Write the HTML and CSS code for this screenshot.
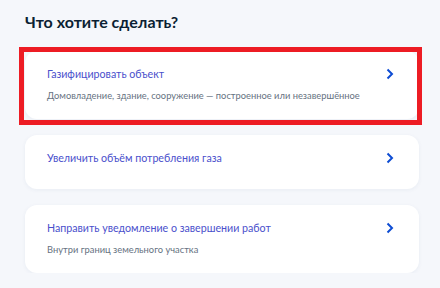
FILE: index.html
```html
<!DOCTYPE html>
<html>
<head>
    <meta charset="utf-8">
    <title>Что хотите сделать?</title>
    <link rel="stylesheet" href="styles.css">
</head>
<body>
    <div class="page">
        <h2>Что хотите сделать?</h2>

        <div class="list">
            <a class="card marked" href="#">
                <div class="card-text">
                    <div class="card-title">Газифицировать объект</div>
                    <div class="card-sub">Домовладение, здание, сооружение — построенное или незавершённое</div>
                </div>
                <svg class="chevron" width="8" height="12" viewBox="0 0 8 12"><path d="M1.5 1.5 L6 6 L1.5 10.5" fill="none" stroke="#0d4cd3" stroke-width="2"/></svg>
            </a>

            <a class="card single" href="#">
                <div class="card-text">
                    <div class="card-title">Увеличить объём потребления газа</div>
                </div>
                <svg class="chevron" width="8" height="12" viewBox="0 0 8 12"><path d="M1.5 1.5 L6 6 L1.5 10.5" fill="none" stroke="#0d4cd3" stroke-width="2"/></svg>
            </a>

            <a class="card" href="#">
                <div class="card-text">
                    <div class="card-title">Направить уведомление о завершении работ</div>
                    <div class="card-sub">Внутри границ земельного участка</div>
                </div>
                <svg class="chevron" width="8" height="12" viewBox="0 0 8 12"><path d="M1.5 1.5 L6 6 L1.5 10.5" fill="none" stroke="#0d4cd3" stroke-width="2"/></svg>
            </a>
        </div>
    </div>
</body>
</html>
```

FILE: styles.css
```css
body {
    margin: 0;
    background: #f5f7fb;
    font-family: Lato, "Noto Sans", sans-serif;
}

.page {
    padding: 11px 21px 0 25px;
}

h2 {
    margin: 0 0 19px;
    font-size: 16px;
    line-height: 21px;
    font-weight: 700;
    color: #0b1f33;
}

.list {
    display: flex;
    flex-direction: column;
    gap: 16px;
}

.card {
    position: relative;
    display: flex;
    align-items: flex-start;
    justify-content: space-between;
    height: 68px;
    box-sizing: border-box;
    background: white;
    border-radius: 12px;
    box-shadow: 0 1px 4px rgba(30, 60, 120, 0.06);
    padding: 15px 25px 0 22px;
    text-decoration: none;
}

.card.single {
    height: 54px;
}

.card-title {
    font-size: 10.67px;
    line-height: 16px;
    color: #4a50cc;
}

.card-sub {
    margin-top: 6.67px;
    font-size: 9.33px;
    line-height: 13.33px;
    color: #66727f;
}

.chevron {
    margin-top: 2px;
    flex-shrink: 0;
}

.marked::after {
    content: "";
    position: absolute;
    left: -6px;
    right: -3px;
    top: -4px;
    bottom: -6px;
    border: 5px solid #ed1c24;
}
```
